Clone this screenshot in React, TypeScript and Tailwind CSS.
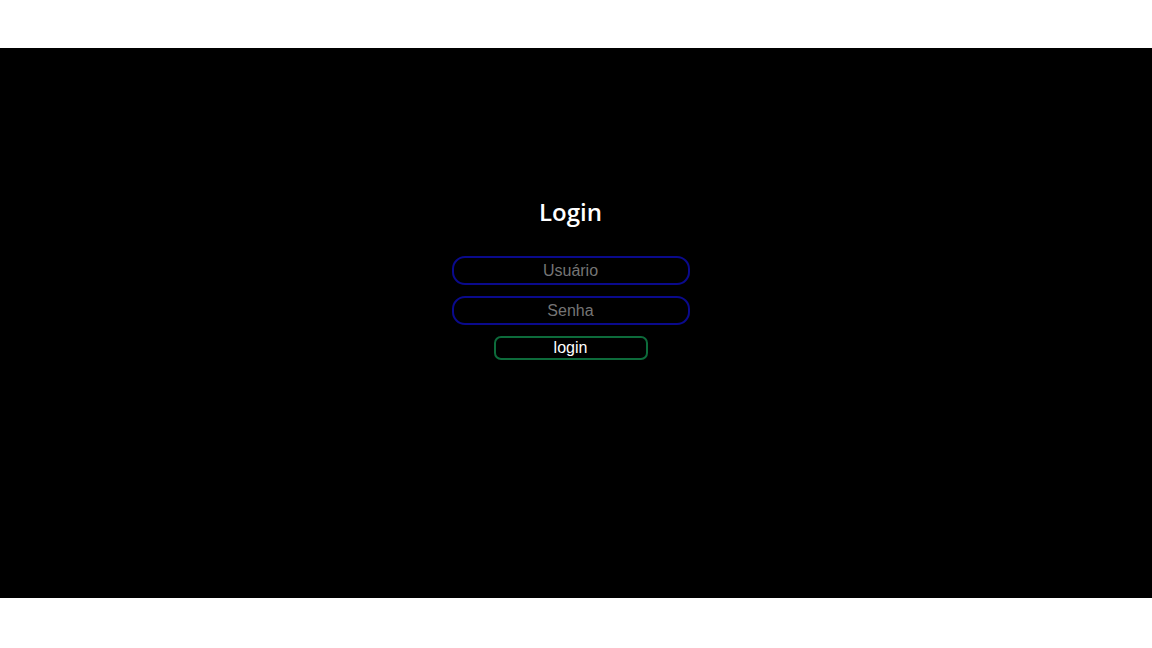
export default function App() {
  return (
    <div className="min-h-[648px] w-full bg-white pt-[48px]">
      <div className="flex h-[550px] w-full flex-col items-center bg-black pr-[11px] pt-[149px]">
        <h1 className="text-[24px] font-semibold leading-[30px] text-white [font-family:'Open_Sans',sans-serif]">
          Login
        </h1>
        <form className="mt-[29px] flex flex-col items-center gap-[11px] [font-family:'Liberation_Sans',Arial,sans-serif]">
          <input
            type="text"
            placeholder="Usuário"
            className="h-[29px] w-[238px] rounded-[13px] border-2 border-[#0a0a8c] bg-black text-center text-[16px] text-white outline-none placeholder:text-[#757575]"
          />
          <input
            type="password"
            placeholder="Senha"
            className="h-[29px] w-[238px] rounded-[13px] border-2 border-[#0a0a8c] bg-black text-center text-[16px] text-white outline-none placeholder:text-[#757575]"
          />
          <button
            type="button"
            className="h-[24px] w-[154px] rounded-[7px] border-2 border-[#0d6b3b] bg-black text-[16px] leading-[20px] text-white"
          >
            login
          </button>
        </form>
      </div>
    </div>
  );
}
